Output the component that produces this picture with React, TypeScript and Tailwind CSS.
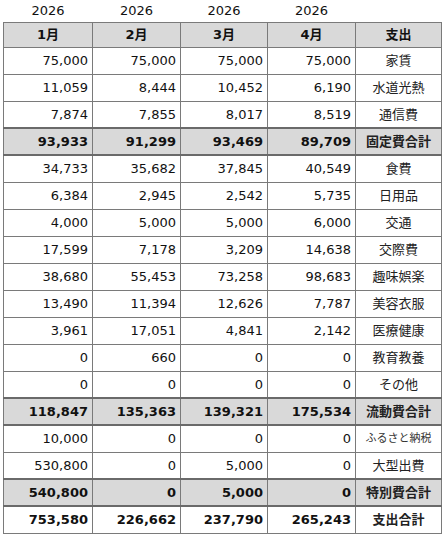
import React from "react";

type Row = { v: string[]; label: string; total?: boolean; grand?: boolean; small?: boolean };

const rows: Row[] = [
  { v: ["75,000", "75,000", "75,000", "75,000"], label: "家賃" },
  { v: ["11,059", "8,444", "10,452", "6,190"], label: "水道光熱" },
  { v: ["7,874", "7,855", "8,017", "8,519"], label: "通信費" },
  { v: ["93,933", "91,299", "93,469", "89,709"], label: "固定費合計", total: true },
  { v: ["34,733", "35,682", "37,845", "40,549"], label: "食費" },
  { v: ["6,384", "2,945", "2,542", "5,735"], label: "日用品" },
  { v: ["4,000", "5,000", "5,000", "6,000"], label: "交通" },
  { v: ["17,599", "7,178", "3,209", "14,638"], label: "交際費" },
  { v: ["38,680", "55,453", "73,258", "98,683"], label: "趣味娯楽" },
  { v: ["13,490", "11,394", "12,626", "7,787"], label: "美容衣服" },
  { v: ["3,961", "17,051", "4,841", "2,142"], label: "医療健康" },
  { v: ["0", "660", "0", "0"], label: "教育教養" },
  { v: ["0", "0", "0", "0"], label: "その他" },
  { v: ["118,847", "135,363", "139,321", "175,534"], label: "流動費合計", total: true },
  { v: ["10,000", "0", "0", "0"], label: "ふるさと納税", small: true },
  { v: ["530,800", "0", "5,000", "0"], label: "大型出費" },
  { v: ["540,800", "0", "5,000", "0"], label: "特別費合計", total: true },
  { v: ["753,580", "226,662", "237,790", "265,243"], label: "支出合計", grand: true },
];

const months = ["1月", "2月", "3月", "4月"];

function rowClass(r: Row) {
  if (r.total) return "h-[27px] bg-[#d9d9d9] font-bold";
  if (r.grand) return "h-[27px] bg-white font-bold";
  return "h-[27px] bg-white";
}

function cellBorder(r: Row) {
  if (r.total) return "border-x border-x-[#7a7a7a] border-y-2 border-y-[#6a6a6a]";
  if (r.grand) return "border-x border-x-[#7a7a7a] border-t-2 border-t-[#6a6a6a] border-b border-b-[#7a7a7a]";
  return "border border-[#7a7a7a]";
}

export default function App() {
  return (
    <div className="w-[444px] h-[536px] bg-white pl-[3px] font-['DejaVu_Sans','Noto_Sans_CJK_JP',sans-serif] text-[13px] text-[#111]">
      <table className="border-collapse table-fixed w-[438px]">
        <colgroup>
          <col className="w-[89px]" />
          <col className="w-[88px]" />
          <col className="w-[87px]" />
          <col className="w-[88px]" />
          <col className="w-[86px]" />
        </colgroup>
        <thead>
          <tr className="h-[22px]">
            {months.map((m) => (
              <td key={m} className="text-center align-middle p-0 leading-none">
                2026
              </td>
            ))}
            <td />
          </tr>
          <tr className="h-[25px] bg-[#d9d9d9]">
            {months.map((m) => (
              <th key={m} className="border border-[#7a7a7a] font-bold text-center p-0">
                {m}
              </th>
            ))}
            <th className="border border-[#7a7a7a] font-bold text-center p-0">支出</th>
          </tr>
        </thead>
        <tbody>
          {rows.map((r, i) => (
            <tr key={i} className={rowClass(r)}>
              {r.v.map((n, j) => (
                <td key={j} className={cellBorder(r) + " text-right pr-[4px] p-0"}>
                  {n}
                </td>
              ))}
              <td
                className={
                  cellBorder(r) +
                  (r.small ? " text-center p-0 text-[11px] text-[#333]" : " text-center p-0 text-[#222]")
                }
              >
                {r.label}
              </td>
            </tr>
          ))}
        </tbody>
      </table>
    </div>
  );
}
